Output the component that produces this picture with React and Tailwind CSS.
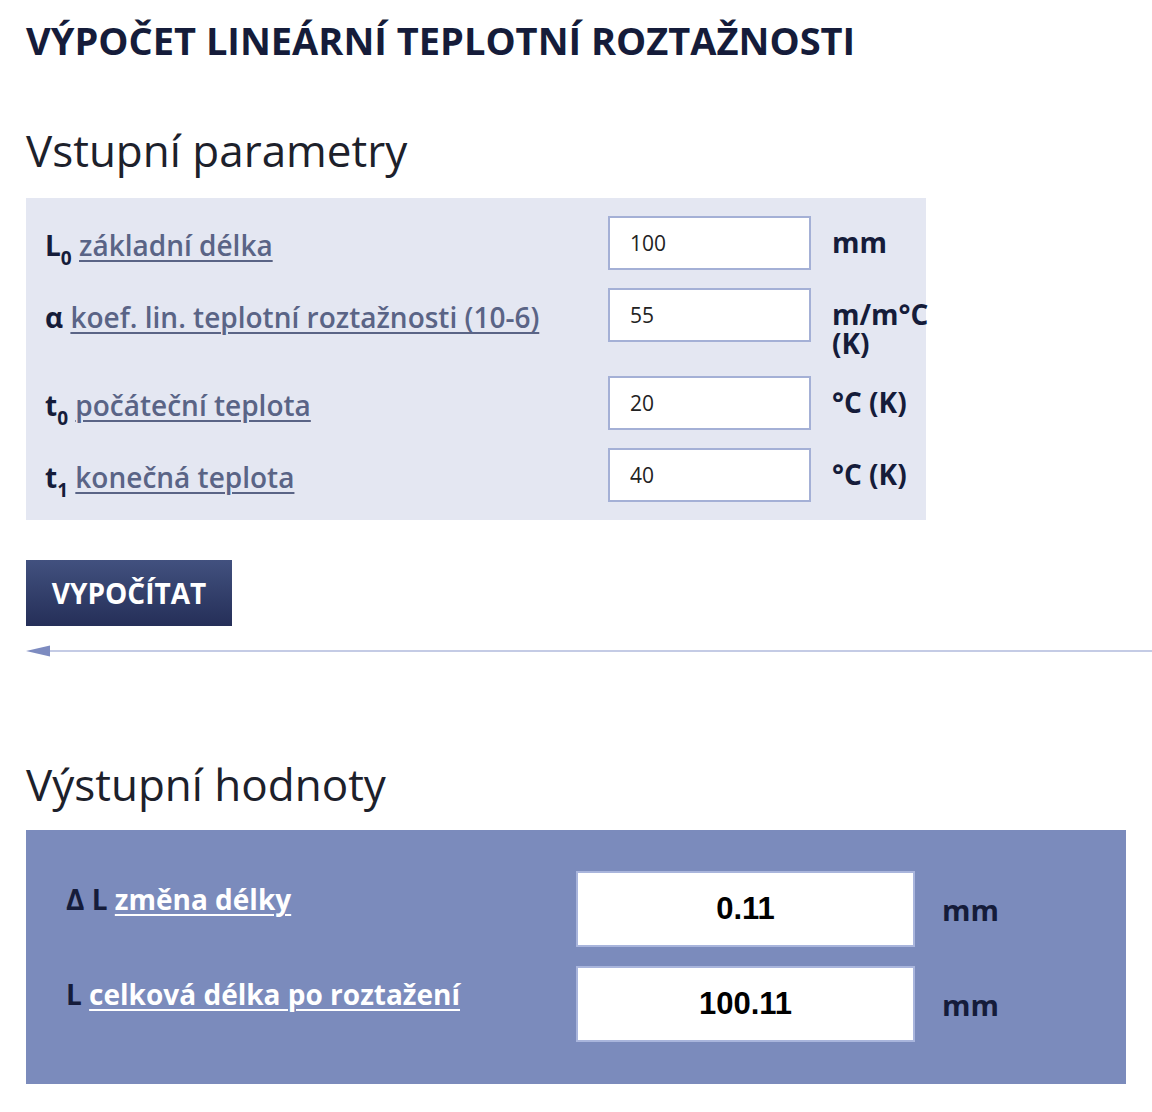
import React from 'react';

const FONT = { fontFamily: '"Open Sans", "Noto Sans", sans-serif' };

const INPUTS = [
  { sym: <>L<sub className="text-[0.68em] align-[-0.2em]">0</sub></>, label: 'základní délka', value: '100', unit: 'mm' },
  { sym: <>α</>, label: 'koef. lin. teplotní roztažnosti (10-6)', value: '55', unit: 'm/m°C (K)' },
  { sym: <>t<sub className="text-[0.68em] align-[-0.2em]">0</sub></>, label: 'počáteční teplota', value: '20', unit: '°C (K)' },
  { sym: <>t<sub className="text-[0.68em] align-[-0.2em]">1</sub></>, label: 'konečná teplota', value: '40', unit: '°C (K)' },
];

const OUTPUTS = [
  { sym: 'Δ L', label: 'změna délky', value: '0.11', unit: 'mm' },
  { sym: 'L', label: 'celková délka po roztažení', value: '100.11', unit: 'mm' },
];

export default function App() {
  return (
    <div className="min-h-screen bg-white pl-[26px] pt-[14px] pb-[28px]" style={FONT}>
      <h1 className="text-[38px] leading-[52px] font-bold text-[#151c3a]">
        VÝPOČET LINEÁRNÍ TEPLOTNÍ ROZTAŽNOSTI
      </h1>

      <h2 className="mt-[54px] text-[44px] leading-[60px] text-[#1d212b]">Vstupní parametry</h2>

      {/* input panel */}
      <div className="mt-[18px] w-[900px] bg-[#e4e7f2] pl-[19px] py-[18px] flex flex-col gap-[18px]">
        {INPUTS.map((r, i) => (
          <div key={i} className="flex items-start">
            <div className="flex-1 pt-[12px] text-[28px] leading-[34px] font-semibold">
              <span className="text-[#151c3a] font-bold">{r.sym}</span>{' '}
              <a href="#" className="text-[#5a6486] underline underline-offset-[4px] decoration-[2px]">{r.label}</a>
            </div>
            <input
              readOnly
              value={r.value}
              className="w-[203px] h-[54px] border-2 border-[#a4b0d6] bg-white px-[20px] text-[21px] text-[#222] outline-none"
              style={FONT}
            />
            <div className="w-[94px] ml-[21px] pt-[12px] text-[28px] leading-[29px] font-bold text-[#151c3a]">
              {r.unit}
            </div>
          </div>
        ))}
      </div>

      <button className="mt-[40px] w-[206px] h-[66px] bg-gradient-to-b from-[#42517f] to-[#252f58] text-white text-[28px] font-bold">
        VYPOČÍTAT
      </button>

      {/* divider with arrow */}
      <div className="mt-[18px] flex items-center h-[14px]">
        <svg width="24" height="12" viewBox="0 0 24 12" className="shrink-0">
          <polygon points="0,6 24,0.5 24,11.5" fill="#7d8bc0" />
        </svg>
        <div className="flex-1 h-[2px] bg-[#c4cbe5]" />
      </div>

      <h2 className="mt-[96px] text-[44px] leading-[60px] text-[#1d212b]">Výstupní hodnoty</h2>

      {/* output panel */}
      <div className="mt-[16px] w-[1100px] bg-[#7b8bbc] pl-[40px] pt-[41px] pb-[42px] flex flex-col gap-[19px]">
        {OUTPUTS.map((r, i) => (
          <div key={i} className="flex items-start">
            <div className="w-[510px] pt-[10px] text-[28px] leading-[36px] font-bold">
              <span className="text-[#151c3a]">{r.sym}</span>{' '}
              <a href="#" className="text-white underline underline-offset-[4px] decoration-[2px]">{r.label}</a>
            </div>
            <div
              className="w-[339px] h-[76px] border-2 border-[#a9b5dc] bg-white flex items-center justify-center text-[31px] font-bold text-black"
              style={{ fontFamily: '"Liberation Sans", Arial, sans-serif' }}
            >
              {r.value}
            </div>
            <div className="ml-[27px] pt-[21px] text-[29px] leading-[36px] font-bold text-[#151c3a]">{r.unit}</div>
          </div>
        ))}
      </div>
    </div>
  );
}
